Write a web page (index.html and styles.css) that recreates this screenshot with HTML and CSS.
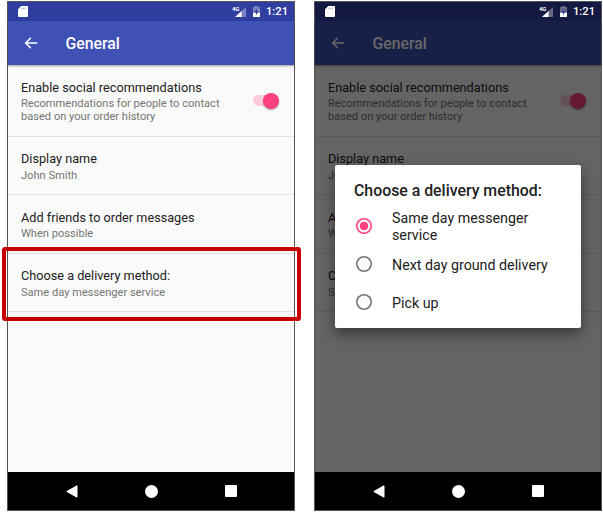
FILE: index.html
```
<!DOCTYPE html>
<html lang="en">
<head>
<meta charset="utf-8">
<title>General settings</title>
<link rel="stylesheet" href="styles.css">
</head>
<body>
<svg class="defs" aria-hidden="true">
  <symbol id="sd" viewBox="0 0 10 11"><path fill="#fff" d="M3.2 0H9a1 1 0 0 1 1 1v9a1 1 0 0 1-1 1H1a1 1 0 0 1-1-1V3.2z"/><path stroke="#7780bb" stroke-width=".7" d="M3.9 1.6v1.6M5.6 1.6v1.6M7.3 1.6v1.6"/></symbol>
  <symbol id="signal" viewBox="0 0 11 10"><path fill="#fff" fill-opacity=".35" d="M11 0v10H0z"/><path fill="#fff" d="M6.6 4V10H0z"/></symbol>
  <symbol id="battery" viewBox="0 0 7 11"><path fill="#fff" fill-opacity=".35" d="M2 0h3v1h2v5H0V1h2z"/><path fill="#fff" d="M0 6.5h7V11H0z"/><path fill="#303f9f" d="M4 2.5v2.8h1.6L3 9.3V6.5H1.4z"/></symbol>
  <symbol id="back" viewBox="0 0 14 12"><path fill="none" stroke="#fff" stroke-width="1.5" d="M13.2 6H1.6M6.9.7 1.6 6l5.3 5.3"/></symbol>
  <symbol id="nav-back" viewBox="0 0 12 13"><path fill="#fff" stroke="#fff" stroke-linejoin="round" d="M.8 6.5 11 .8v11.4z"/></symbol>
</svg>
<main class="screens">
  <section class="phone">
    <div class="status"><svg class="sd"><use href="#sd"/></svg><span class="net">4G</span><svg class="signal"><use href="#signal"/></svg><svg class="battery"><use href="#battery"/></svg><time>1:21</time></div>
    <header class="toolbar"><svg class="back"><use href="#back"/></svg><h1>General</h1></header>
    <div class="list">
      <div class="item social"><div><h2>Enable social recommendations</h2><p>Recommendations for people to contact<br>based on your order history</p></div><span class="switch"></span></div>
      <div class="item"><h2>Display name</h2><p>John Smith</p></div>
      <div class="item"><h2>Add friends to order messages</h2><p>When possible</p></div>
      <div class="item"><h2>Choose a delivery method:</h2><p>Same day messenger service</p></div>
    </div>
    <nav class="navbar"><svg class="nav-back"><use href="#nav-back"/></svg><i class="home"></i><i class="recent"></i></nav>
    <div class="highlight"></div>
  </section>
  <section class="phone dimmed">
    <div class="status"><svg class="sd"><use href="#sd"/></svg><span class="net">4G</span><svg class="signal"><use href="#signal"/></svg><svg class="battery"><use href="#battery"/></svg><time>1:21</time></div>
    <header class="toolbar"><svg class="back"><use href="#back"/></svg><h1>General</h1></header>
    <div class="list">
      <div class="item social"><div><h2>Enable social recommendations</h2><p>Recommendations for people to contact<br>based on your order history</p></div><span class="switch"></span></div>
      <div class="item"><h2>Display name</h2><p>John Smith</p></div>
      <div class="item"><h2>Add friends to order messages</h2><p>When possible</p></div>
      <div class="item"><h2>Choose a delivery method:</h2><p>Same day messenger service</p></div>
    </div>
    <nav class="navbar"><svg class="nav-back"><use href="#nav-back"/></svg><i class="home"></i><i class="recent"></i></nav>
    <div class="scrim"></div>
    <div class="dialog">
      <h2>Choose a delivery method:</h2>
      <div class="option"><i class="radio on"></i><span>Same day messenger<br>service</span></div>
      <div class="option"><i class="radio"></i><span>Next day ground delivery</span></div>
      <div class="option"><i class="radio"></i><span>Pick up</span></div>
    </div>
  </section>
</main>
</body>
</html>
```
FILE: styles.css
```
* { box-sizing: border-box; }
body { margin: 0; background: #fff; font-family: Roboto, sans-serif; }
h1, h2, p { margin: 0; font-weight: 400; white-space: nowrap; }
svg { display: block; flex: none; }
.defs { position: absolute; width: 0; height: 0; }
.screens { display: flex; gap: 19px; padding: 1px 0 0 7px; height: 512px; }
.phone { position: relative; display: flex; flex-direction: column; flex: none; width: 288px; height: 510px; border: 1px solid #555; background: #fafafa; }

.status { display: flex; align-items: center; height: 19px; padding: 0 6px 0 10px; background: #303f9f; color: #fff; }
.sd { width: 10px; height: 11px; }
.net { margin: -7px -4px 0 auto; font-size: 6px; line-height: 7px; font-weight: 700; letter-spacing: -.3px; }
.signal { width: 11px; height: 10px; }
.battery { width: 7px; height: 11px; margin: 0 6px 0 7px; }
.status time { font-size: 11.2px; font-weight: 500; line-height: 20px; padding-top: 1px; }

.toolbar { position: relative; display: flex; align-items: center; height: 44px; padding-left: 16px; background: #3f51b5; color: #fff; box-shadow: 0 1px 2px rgba(0, 0, 0, .4); }
.back { width: 14px; height: 12px; }
.toolbar h1 { margin: 2px 0 0 27.5px; font-size: 15.8px; font-weight: 500; line-height: 20px; }

.list { flex: 1; }
.item { height: 58.5px; padding: 13.5px 13px 0; border-bottom: 1.5px solid #e3e3e3; }
.item h2 { font-size: 12.7px; line-height: 17px; color: #212121; }
.item p { font-size: 11.1px; line-height: 13px; margin-top: 2px; color: #757575; }
.item:nth-child(2), .item:nth-child(3) { padding-top: 13.9px; }
.item:nth-child(3) p { margin-top: 1.4px; }
.social { display: flex; justify-content: space-between; height: 71.5px; padding-top: 14px; }
.social p { margin-top: 1px; }
.switch { position: relative; width: 26px; height: 11px; margin: 16px 2px 0 0; background: linear-gradient(#fecbdb, #fecbdb) 0 50% / 20px 11px no-repeat; border-radius: 6px; }
.switch::after { content: ""; position: absolute; right: 0; top: -2px; width: 16px; height: 16px; border-radius: 50%; background: #ff4081; box-shadow: 0 1px 2px rgba(0, 0, 0, .35); }

.navbar { position: relative; display: flex; align-items: center; justify-content: space-between; height: 38px; padding: 0 57px 0 58px; background: #000; }
.nav-back { width: 12px; height: 13px; }
.home { width: 13px; height: 13px; border-radius: 50%; background: #fff; }
.recent { width: 12px; height: 12px; border-radius: 1px; background: #fff; }

.highlight { position: absolute; left: -6px; top: 244.5px; width: 299px; height: 74px; border: 4px solid #c80000; border-radius: 3px; }

.dimmed .status { background: #131940; }
.scrim { position: absolute; inset: 19px 0 38px; z-index: 1; background: rgba(0, 0, 0, .6); }
.dialog { position: absolute; z-index: 2; left: 20px; top: 163px; width: 246px; height: 163px; padding: 16px 19px 0; border-radius: 2px; background: #fff; box-shadow: 0 6px 14px rgba(0, 0, 0, .45); color: #212121; }
.dialog h2 { font-size: 15.85px; font-weight: 500; line-height: 20px; }
.option { display: flex; align-items: center; height: 38px; font-size: 14.25px; line-height: 16.5px; white-space: nowrap; }
.option:first-of-type { margin-top: 6px; }
.option span { padding-top: 1.5px; }
.radio { width: 16px; height: 16px; margin: 0 20.5px 0 1.5px; border-radius: 50%; box-shadow: inset 0 0 0 1.6px #757575; }
.radio.on { background: radial-gradient(circle, #ff4081 4px, transparent 4.6px); box-shadow: inset 0 0 0 1.6px #ff4081; }
```
